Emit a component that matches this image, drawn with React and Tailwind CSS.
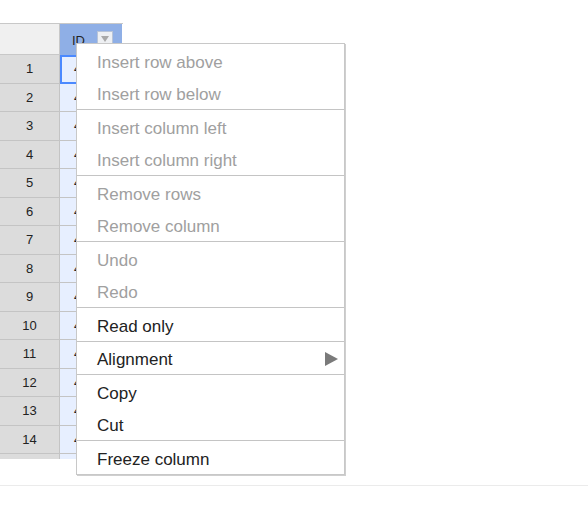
import React from "react";

const rows = Array.from({ length: 15 }, (_, i) => i + 1);

function Item({ label, disabled, arrow }) {
  return (
    <div
      className={`flex h-[32.5px] items-center justify-between pt-[5px] pl-[20px] pr-[6px] text-[17px] leading-[20px] ${
        disabled ? "text-[#a0a0a0]" : "text-[#222]"
      }`}
    >
      <span>{label}</span>
      {arrow && (
        <svg width="13" height="14" viewBox="0 0 13 14" className="-mt-[3px]">
          <polygon points="0,0 13,7 0,14" fill="#7a7a7a" />
        </svg>
      )}
    </div>
  );
}

function Sep() {
  return <div className="h-px bg-[#c4c4c4]" />;
}

export default function App() {
  return (
    <div
      className="relative h-[517px] w-[588px] overflow-hidden bg-white"
      style={{ fontFamily: '"Liberation Sans", Arial, sans-serif' }}
    >
      <div className="pt-[23px]">
        <div className="h-[436px] w-[123px] overflow-hidden">
          {/* header */}
          <div className="flex h-[32px] border-t border-[#c8c8c8]">
            <div className="w-[60px] shrink-0 border-r border-b border-[#c8c8c8] bg-[#f0f0f0]" />
            <div className="relative flex w-[62px] shrink-0 items-center bg-[#8fafe6] pl-[12px] text-[13px] text-[#222]">
              <span className="mt-[2px]">ID</span>
              <div className="absolute left-[37px] top-[7px] flex h-[16px] w-[16px] items-start justify-center border border-[#b8c4d8] bg-[#eef0f3] pt-[4px]">
                <svg width="8" height="6" viewBox="0 0 8 6">
                  <polygon points="0,0 8,0 4,6" fill="#a9a9a9" />
                </svg>
              </div>
            </div>
          </div>
          {rows.map((r) => (
            <div key={r} className="flex h-[28.5px]">
              <div className="flex w-[60px] shrink-0 items-center justify-center border-r border-b border-[#c4c4c4] bg-[#dcdcdc] text-[13px] text-[#222]">
                {r < 15 ? r : ""}
              </div>
              <div
                className={`relative flex w-[62px] shrink-0 items-center border-b border-[#c4c4c4] bg-[#e7efff] pl-[14px] text-[13px] text-[#222] ${
                  r === 1 ? "outline-2 -outline-offset-2 outline-[#4b89ff]" : ""
                }`}
              >
                {r < 15 ? "4" : ""}
              </div>
            </div>
          ))}
        </div>
        <div className="mt-[26px] h-px w-full bg-[#ebebeb]" />
      </div>

      {/* context menu */}
      <div className="absolute left-[76px] top-[43px] w-[269px] border border-[#c8c8c8] bg-white shadow-[1px_1px_0_#cfcfcf]">
        <Item label="Insert row above" disabled />
        <Item label="Insert row below" disabled />
        <Sep />
        <Item label="Insert column left" disabled />
        <Item label="Insert column right" disabled />
        <Sep />
        <Item label="Remove rows" disabled />
        <Item label="Remove column" disabled />
        <Sep />
        <Item label="Undo" disabled />
        <Item label="Redo" disabled />
        <Sep />
        <Item label="Read only" />
        <Sep />
        <Item label="Alignment" arrow />
        <Sep />
        <Item label="Copy" />
        <Item label="Cut" />
        <Sep />
        <Item label="Freeze column" />
      </div>
    </div>
  );
}
